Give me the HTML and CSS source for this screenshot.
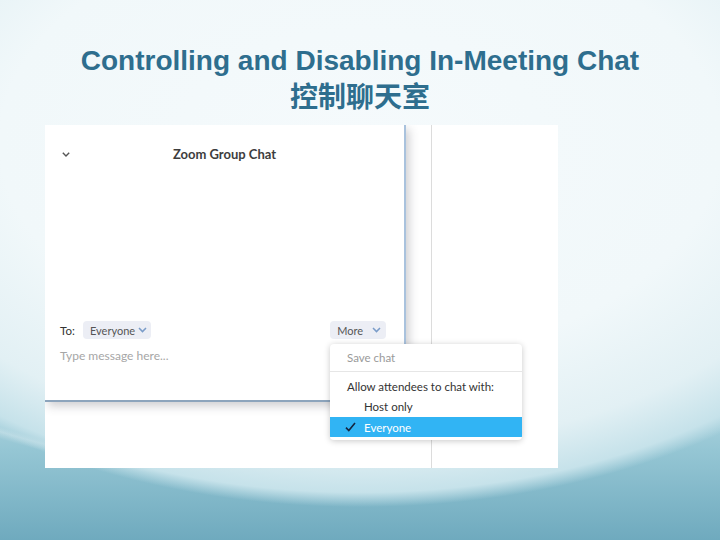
FILE: index.html
```
<!DOCTYPE html>
<html>
<head>
<meta charset="utf-8">
<link rel="stylesheet" href="styles.css">
</head>
<body>
<div class="slide">
  <h1 class="title">
    <span class="en">Controlling and Disabling In-Meeting Chat</span>
    <span class="zh">控制聊天室</span>
  </h1>
  <div class="shot">
    <div class="panel">
      <div class="chat-head">
        <svg class="head-chev" width="8" height="5" viewBox="0 0 8 5"><path d="M0.8 0.8 L4 4 L7.2 0.8" fill="none" stroke="#555" stroke-width="1.4"/></svg>
        <div class="chat-title">Zoom Group Chat</div>
        <div></div>
      </div>
      <div class="chat-body"></div>
      <div class="to-row">
        <span class="to-label">To:</span>
        <span class="pill">Everyone<svg class="pill-chev" width="9" height="6" viewBox="0 0 9 6"><path d="M1 1 L4.5 4.6 L8 1" fill="none" stroke="#7a9cc9" stroke-width="1.5"/></svg></span>
        <span class="pill more">More<svg class="pill-chev" width="9" height="6" viewBox="0 0 9 6"><path d="M1 1 L4.5 4.6 L8 1" fill="none" stroke="#7a9cc9" stroke-width="1.5"/></svg></span>
      </div>
      <div class="input-row">Type message here...</div>
    </div>
    <div class="gap"></div>
    <div class="divider"></div>
    <div class="side"></div>
    <div class="menu">
      <div class="menu-item save">Save chat</div>
      <div class="menu-item label">Allow attendees to chat with:</div>
      <div class="menu-item opt">Host only</div>
      <div class="menu-item opt selected"><svg class="check" width="11" height="10" viewBox="0 0 11 10"><path d="M1 5.6 L3.8 8.6 L10 1" fill="none" stroke="#15253f" stroke-width="1.6"/></svg>Everyone</div>
    </div>
  </div>
</div>
</body>
</html>
```
FILE: styles.css
```
* { box-sizing: border-box; margin: 0; padding: 0; }
html, body { width: 720px; height: 540px; overflow: hidden; }
body {
  font-family: "Liberation Sans", Arial, sans-serif;
  background:
    radial-gradient(600px 365px at 360px 142px, #f5fafc 0%, #f1f8fa 60%, #e2f0f4 84%, #c6e2ea 96%, rgba(190,220,230,0) 100%),
    radial-gradient(740px 440px at 330px 55px, rgba(255,255,255,0) 95.5%, rgba(255,255,255,0.28) 96.5%, rgba(255,255,255,0) 98%),
    linear-gradient(180deg, #c0dfe8 370px, #95c6d4 450px, #6faabe 540px);
}
.slide { width: 720px; height: 540px; }
.title {
  padding-top: 44px;
  text-align: center;
  color: #2e6e8e;
  font-weight: bold;
  font-size: 28px;
  line-height: 34px;
}
.title span { display: block; }
.title .zh { font-family: "Noto Sans CJK SC", "Noto Sans CJK TC", sans-serif; font-size: 28px; }

.shot {
  margin: 13px 0 0 45px;
  width: 513px;
  height: 343px;
  background: #fff;
  overflow: hidden;
  position: relative;
  display: grid;
  grid-template-columns: 361px 25px 1px 1fr;
  font-family: Lato, "Noto Sans", sans-serif;
}
.panel {
  height: 277px;
  background: #fff;
  border-right: 2px solid #a9c2dd;
  border-bottom: 2px solid #8ca4bc;
  box-shadow: 3px 4px 9px rgba(60, 60, 70, 0.25);
  padding: 0 15px;
  display: flex;
  flex-direction: column;
  position: relative;
  z-index: 1;
}
.chat-head {
  height: 58px;
  display: grid;
  grid-template-columns: 1fr auto 1fr;
  align-items: center;
}
.head-chev { margin-left: 2px; }
.chat-title { font-weight: bold; font-size: 13px; color: #3d3d3d; }
.chat-body { height: 138px; }
.to-row { height: 18px; display: flex; align-items: center; }
.to-label { font-size: 11.5px; color: #333; width: 23px; }
.pill {
  height: 18px;
  background: #eceef5;
  border-radius: 4px;
  display: inline-flex;
  align-items: center;
  padding: 0 4px 0 7px;
  font-size: 11px;
  color: #555;
}
.pill-chev { margin-left: 3px; flex-shrink: 0; display: block; }
.pill.more { margin-left: auto; margin-right: 3px; padding-left: 7px; padding-right: 5px; }
.pill.more .pill-chev { margin-left: 9px; }
.input-row { margin-top: 8px; line-height: 18px; font-size: 12px; color: #a6a6a6; }

.divider { background: #dcdcdc; }

.menu {
  position: absolute;
  left: 285px;
  top: 219px;
  width: 192px;
  height: 96px;
  background: #fff;
  border-radius: 4px;
  box-shadow: 0 1px 6px rgba(0, 0, 0, 0.22);
  z-index: 2;
  font-size: 11.5px;
  overflow: hidden;
}
.menu-item { display: flex; align-items: center; }
.menu-item.save { height: 28px; padding-left: 17px; color: #9a9a9a; border-bottom: 1px solid #e6e6e6; padding-bottom: 1px; }
.menu-item.label { height: 20px; margin-top: 4px; padding-left: 17px; color: #333; }
.menu-item.opt { height: 21px; padding-left: 34px; color: #333; }
.menu-item.selected { height: 20px; background: #31b4f4; color: #fff; padding-left: 15px; }
.check { margin-right: 8px; flex-shrink: 0; }
```
